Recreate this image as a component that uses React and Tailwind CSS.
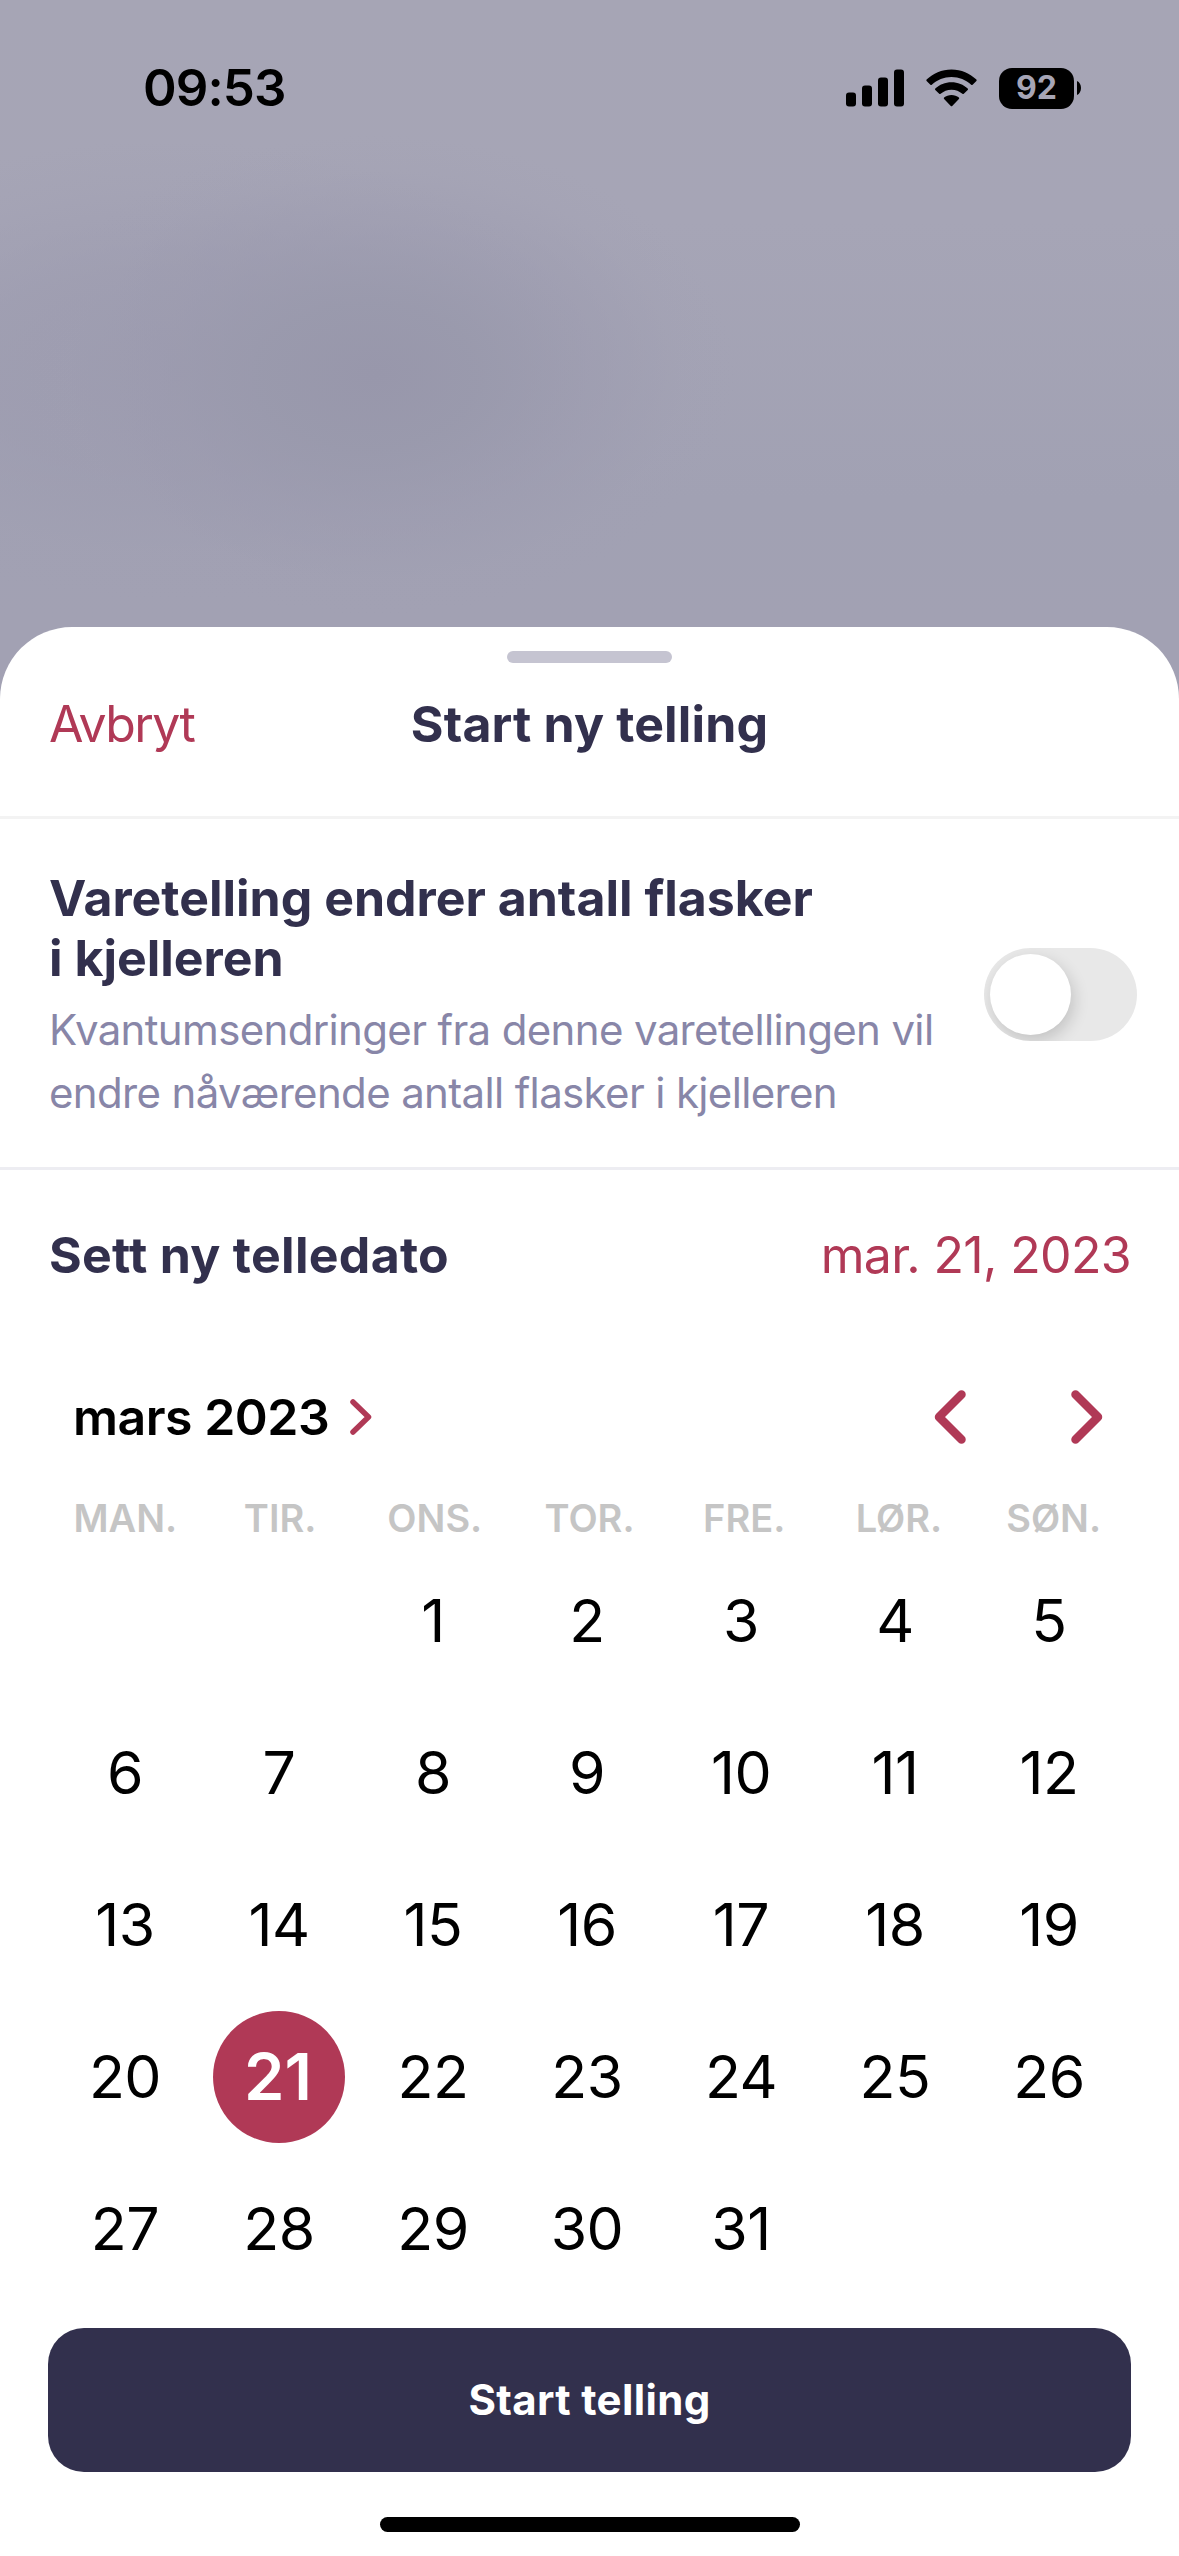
import { useState } from "react";
import clsx from "clsx";

const WEEKDAYS = ["MAN.", "TIR.", "ONS.", "TOR.", "FRE.", "LØR.", "SØN."];
const LEADING_BLANKS = 2; // 1. mars 2023 er en onsdag
const DAYS = Array.from({ length: 31 }, (_, i) => i + 1);

export default function App() {
  const [selected, setSelected] = useState(21);
  const [changesStock, setChangesStock] = useState(false);

  return (
    <main className="flex h-[2556px] w-[1179px] flex-col overflow-hidden bg-[#a5a4b5] bg-[radial-gradient(ellipse_360px_240px_at_375px_375px,#9897abff_0%,#9999ace0_30%,#9c9baf90_60%,#a09fb230_85%,#a5a4b500_100%),radial-gradient(ellipse_420px_230px_at_170px_370px,#9b9aaecc_0%,#9c9baf99_45%,#a09fb240_80%,#a5a4b500_100%),linear-gradient(to_bottom,#a6a5b5_0px,#a6a5b6_220px,#a1a1b3_500px,#a2a1b3_620px)] font-[Inter,sans-serif] text-[#32304d]">
      <StatusBar />

      <section className="flex flex-1 flex-col rounded-t-[72px] bg-white">
        <div className="flex justify-center pt-6">
          <span className="h-3 w-[165px] rounded-full bg-[#c5c4d1]" />
        </div>

        <header className="grid h-[156px] grid-cols-[1fr_auto_1fr] items-start border-b-[3px] border-[#f3f3f3] px-[49px] pt-[31px] text-[50px] leading-[60px]">
          <button className="text-left tracking-[-1.6px] text-[#b03956]">Avbryt</button>
          <h1 className="font-bold tracking-[0.15px]">Start ny telling</h1>
          <span />
        </header>

        <div className="flex h-[351px] items-start justify-between border-b-[3px] border-[#ededf2] pr-[42px] pl-[49px] pt-[49px]">
          <div className="whitespace-nowrap">
            <h2 className="text-[50px] leading-[60px] font-bold">
              Varetelling endrer antall flasker
              <br />i kjelleren
            </h2>
            <p className="mt-[10px] text-[42px] leading-[63px] tracking-[-0.65px] text-[#8886a8]">
              Kvantumsendringer fra denne varetellingen vil
              <br />
              endre nåværende antall flasker i kjelleren
            </p>
          </div>
          <Toggle checked={changesStock} onChange={setChangesStock} />
        </div>

        <div className="flex h-[172px] items-center justify-between pr-[48px] pb-[2px] pl-[49px] text-[50px] leading-[60px]">
          <h2 className="font-bold tracking-[0.3px]">Sett ny telledato</h2>
          <span className="tracking-[-0.65px] text-[#b03956]">mar. 21, 2023</span>
        </div>

        <div className="flex h-[150px] items-center justify-between pr-[76px] pb-px pl-[73px]">
          <button className="flex items-center gap-[21px] text-[50px] leading-[60px] font-semibold tracking-[-0.5px] text-black">
            mars 2023
            <Chevron className="h-9 w-[22px]" d="M3 3 L18.5 18 L3 33" box="0 0 22 36" stroke={5.5} />
          </button>
          <div className="flex gap-[105px]">
            <button>
              <Chevron className="h-[54px] w-8" d="M27.5 4.5 L5 27 L27.5 49.5" box="0 0 32 54" stroke={8.5} />
            </button>
            <button>
              <Chevron className="h-[54px] w-8" d="M4.5 4.5 L27 27 L4.5 49.5" box="0 0 32 54" stroke={8.5} />
            </button>
          </div>
        </div>

        <div className="grid grid-cols-7 px-12 pt-[2px] text-center text-[38px] leading-[48px] font-semibold text-[#c5c5c5]">
          {WEEKDAYS.map((day) => (
            <span key={day}>{day}</span>
          ))}
        </div>

        <div className="grid grid-cols-7 pt-[3px] pr-[53px] pl-12">
          {Array.from({ length: LEADING_BLANKS }, (_, i) => (
            <span key={"blank" + i} />
          ))}
          {DAYS.map((day) => (
            <button
              key={day}
              onClick={() => setSelected(day)}
              className="grid h-[152px] place-items-center"
            >
              <span
                className={clsx(
                  "grid h-[132px] w-[132px] place-items-center rounded-full pb-[2px] leading-none",
                  day === selected
                    ? "bg-[#b03956] pr-[2px] text-[65px] font-semibold text-white"
                    : "text-[59px] tracking-[-0.5px] text-black"
                )}
              >
                {day}
              </span>
            </button>
          ))}
        </div>

        <button className="mx-12 mt-[23px] h-36 rounded-[36px] bg-[#32304d] pb-[2px] text-[42px] font-bold tracking-[0.35px] text-white">
          Start telling
        </button>

        <div className="mx-auto mt-[45px] h-[15px] w-[420px] rounded-full bg-black" />
      </section>
    </main>
  );
}

function StatusBar() {
  return (
    <div className="flex h-[627px] items-start justify-between pt-[58px] pr-[98px] pl-[143px] text-black">
      <span className="text-[51px] leading-[60px] font-semibold tracking-[-0.9px]">09:53</span>
      <div className="flex h-[60px] items-center">
        <svg className="h-[38px] w-[58px]" viewBox="0 0 58 38">
          <rect x="0" y="23.5" width="10" height="14" rx="3" />
          <rect x="16" y="16.5" width="10" height="21" rx="3" />
          <rect x="32" y="8.5" width="10" height="29" rx="3" />
          <rect x="48" y="0.5" width="10" height="37" rx="3" />
        </svg>
        <svg className="ml-[22px] h-[38px] w-[51px]" viewBox="0 0 51 38">
          <path d="M25.5 0.5 C35.3 0.5 44 4.4 50.4 10.6 Q51 11.3 50.4 12 L46.6 15.8 Q45.9 16.4 45.2 15.8 C40 11 33 8.1 25.5 8.1 C18 8.1 11 11 5.8 15.8 Q5.1 16.4 4.4 15.8 L0.6 12 Q0 11.3 0.6 10.6 C7 4.4 15.7 0.5 25.5 0.5 Z" />
          <path d="M25.5 13.3 C31.8 13.3 37.5 15.7 41.7 19.6 Q42.4 20.3 41.7 21 L37.8 24.8 Q37.1 25.4 36.4 24.8 C33.5 22.3 29.7 20.7 25.5 20.7 C21.3 20.7 17.5 22.3 14.6 24.8 Q13.9 25.4 13.2 24.8 L9.3 21 Q8.6 20.3 9.3 19.6 C13.5 15.7 19.2 13.3 25.5 13.3 Z" />
          <path d="M25.5 26 C28.3 26 30.9 27 32.9 28.6 Q33.6 29.3 32.9 30 L26.2 37 Q25.5 37.6 24.8 37 L18.1 30 Q17.4 29.3 18.1 28.6 C20.1 27 22.7 26 25.5 26 Z" />
        </svg>
        <span className="ml-[22px] flex h-[41px] w-[75px] items-center justify-center rounded-[13px] bg-black text-[32px] leading-none font-bold text-[#a6a5b6]">
          92
        </span>
        <svg className="ml-[3px] h-[14px] w-1" viewBox="0 0 4 14">
          <path d="M0 0 C2.5 1 4 3.8 4 7 C4 10.2 2.5 13 0 14 Z" />
        </svg>
      </div>
    </div>
  );
}

function Toggle({ checked, onChange }) {
  return (
    <button
      role="switch"
      aria-checked={checked}
      onClick={() => onChange(!checked)}
      className={clsx(
        "mt-20 flex h-[93px] w-[153px] shrink-0 items-center overflow-hidden rounded-full px-1.5",
        checked ? "justify-end bg-[#b03956]" : "bg-[#e8e8e8]"
      )}
    >
      <span className="h-[81px] w-[81px] rounded-full bg-white shadow-[3px_6px_16px_rgba(0,0,0,0.16)]" />
    </button>
  );
}

function Chevron({ d, box, stroke, className }) {
  return (
    <svg className={className} viewBox={box} fill="none" stroke="#b03956" strokeWidth={stroke} strokeLinecap="round" strokeLinejoin="round">
      <path d={d} />
    </svg>
  );
}
